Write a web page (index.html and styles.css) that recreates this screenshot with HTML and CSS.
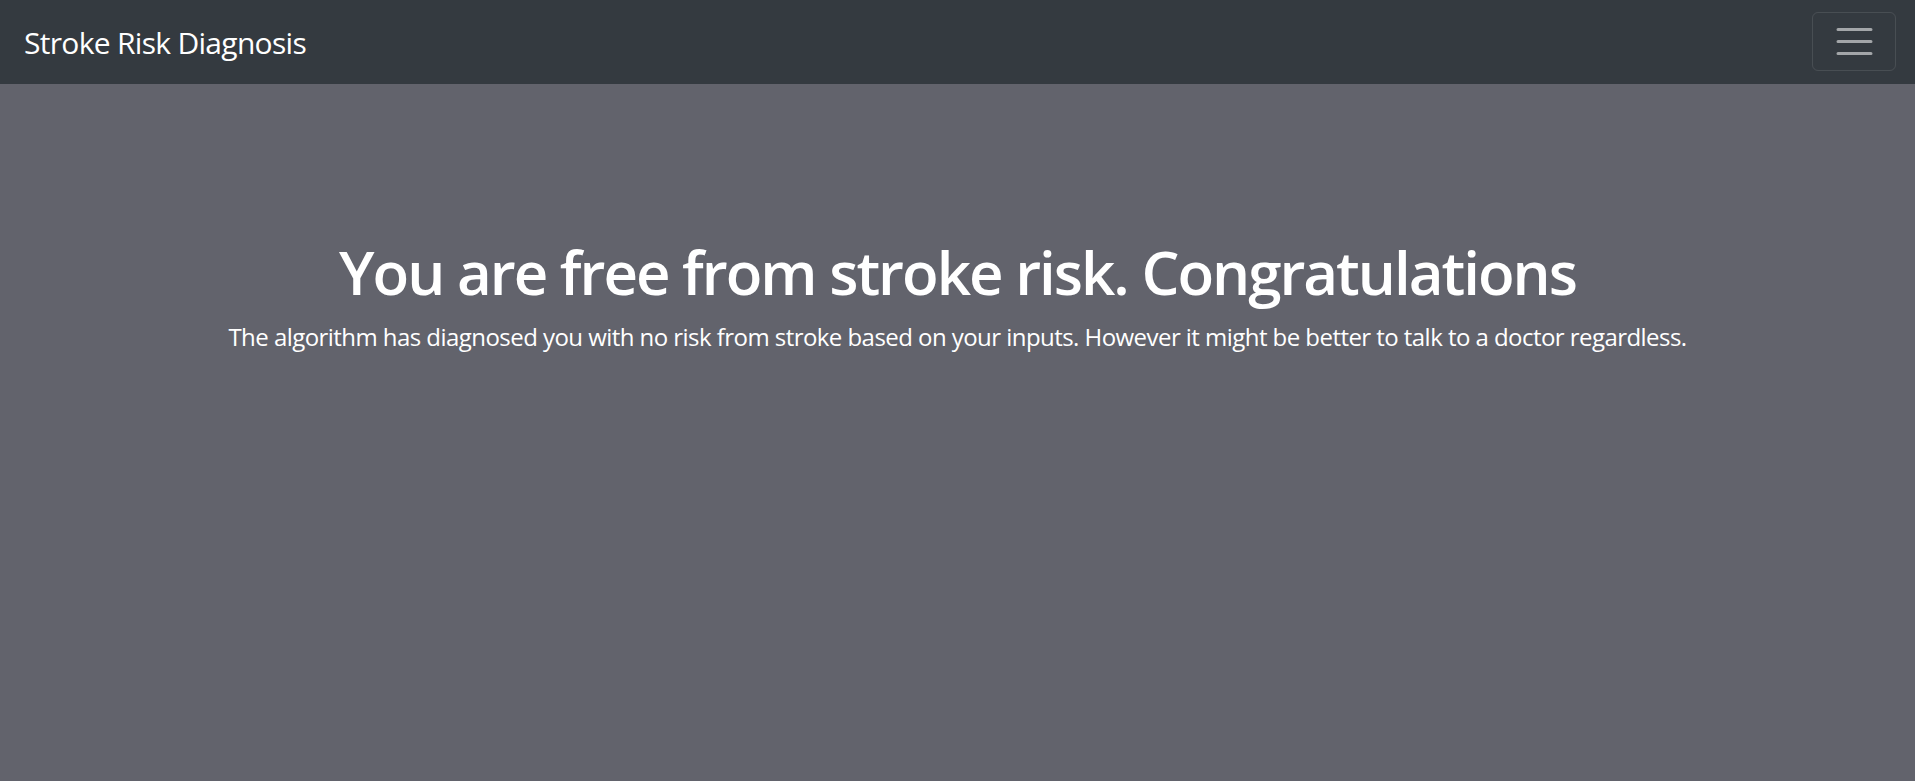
FILE: index.html
```html
<!DOCTYPE html>
<html lang="en">
<head>
<meta charset="utf-8">
<title>Stroke Risk Diagnosis</title>
<link rel="stylesheet" href="styles.css">
</head>
<body>
<nav class="navbar">
  <a class="brand" href="#">Stroke Risk Diagnosis</a>
  <button class="toggler" type="button" aria-label="Toggle navigation">
    <svg class="toggler-icon" width="45" height="45" viewBox="0 0 30 30" aria-hidden="true">
      <path d="M4 7h22M4 15h22M4 23h22" stroke="rgba(255,255,255,0.55)" stroke-width="2" stroke-linecap="round"/>
    </svg>
  </button>
</nav>
<main class="hero">
  <h1 class="hero-title">You are free from stroke risk. Congratulations</h1>
  <p class="hero-text">The algorithm has diagnosed you with no risk from stroke based on your inputs. However it might be better to talk to a doctor regardless.</p>
</main>
</body>
</html>
```
FILE: styles.css
```css
* { box-sizing: border-box; }
html, body { margin: 0; padding: 0; }
body {
  background: #62636c;
  color: #fff;
  font-family: "Open Sans", "Noto Sans", sans-serif;
  min-height: 781px;
}
.navbar {
  display: flex;
  align-items: center;
  justify-content: space-between;
  height: 84px;
  padding: 0 19px 0 24px;
  background: #343a40;
}
.brand {
  color: #fff;
  text-decoration: none;
  font-size: 30px;
  line-height: 1;
  letter-spacing: -0.7px;
  margin-top: 2px;
}
.toggler {
  width: 84px;
  height: 59px;
  margin-top: -1px;
  padding: 0;
  display: flex;
  align-items: center;
  justify-content: center;
  background: transparent;
  border: 1.5px solid rgba(255,255,255,0.1);
  border-radius: 6px;
}
.toggler-icon { display: block; }
.hero {
  padding-top: 152px;
  text-align: center;
}
.hero-title {
  margin: 0 0 11px;
  font-size: 60px;
  line-height: 72px;
  font-weight: 600;
  letter-spacing: -2px;
}
.hero-text {
  margin: 0;
  font-size: 24px;
  line-height: 36px;
  letter-spacing: -0.55px;
}
```
